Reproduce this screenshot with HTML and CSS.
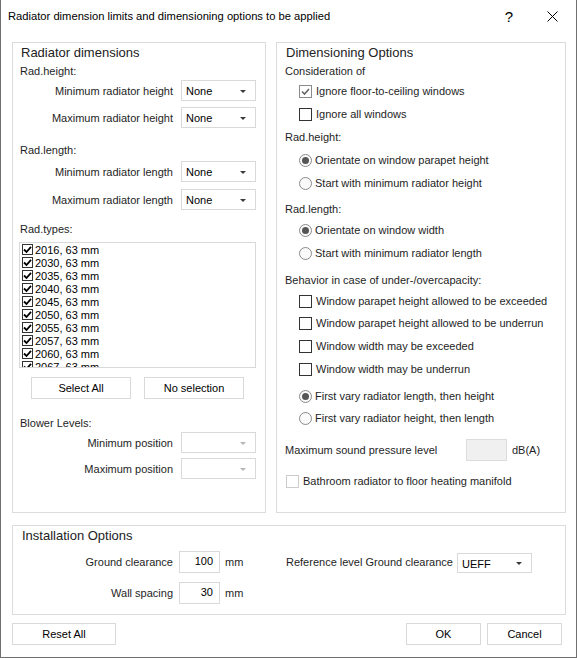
FILE: index.html
```html
<!DOCTYPE html>
<html lang="en">
<head>
<meta charset="utf-8">
<title>Radiator dimension limits</title>
<link rel="stylesheet" href="styles.css">
</head>
<body>
<div class="window">
  <header class="titlebar">
    <span class="title">Radiator dimension limits and dimensioning options to be applied</span>
    <span class="help">?</span>
    <span class="close"><svg width="11" height="11" viewBox="0 0 11 11"><path d="M0.5 0.5L10.5 10.5M10.5 0.5L0.5 10.5" stroke="#000" stroke-width="1" fill="none"/></svg></span>
  </header>

  <main class="content">
    <div class="columns">
      <!-- Left column: radiator dimensions -->
      <section class="group group-left">
        <div class="group-title">Radiator dimensions</div>
        <div class="section-label">Rad.height:</div>
        <div class="field-row">
          <span class="field-label">Minimum radiator height</span>
          <div class="combo"><span>None</span><i class="arrow"></i></div>
        </div>
        <div class="field-row gap-6">
          <span class="field-label">Maximum radiator height</span>
          <div class="combo"><span>None</span><i class="arrow"></i></div>
        </div>
        <div class="section-label gap-13">Rad.length:</div>
        <div class="field-row gap-2">
          <span class="field-label">Minimum radiator length</span>
          <div class="combo"><span>None</span><i class="arrow"></i></div>
        </div>
        <div class="field-row gap-7">
          <span class="field-label">Maximum radiator length</span>
          <div class="combo"><span>None</span><i class="arrow"></i></div>
        </div>
        <div class="section-label gap-10">Rad.types:</div>
        <div class="type-list">
          <div class="type-item"><span class="list-check"><svg viewBox="0 0 9 9"><path d="M1 4.5L3.5 7L8 1.8" /></svg></span>2016, 63 mm</div>
          <div class="type-item"><span class="list-check"><svg viewBox="0 0 9 9"><path d="M1 4.5L3.5 7L8 1.8" /></svg></span>2030, 63 mm</div>
          <div class="type-item"><span class="list-check"><svg viewBox="0 0 9 9"><path d="M1 4.5L3.5 7L8 1.8" /></svg></span>2035, 63 mm</div>
          <div class="type-item"><span class="list-check"><svg viewBox="0 0 9 9"><path d="M1 4.5L3.5 7L8 1.8" /></svg></span>2040, 63 mm</div>
          <div class="type-item"><span class="list-check"><svg viewBox="0 0 9 9"><path d="M1 4.5L3.5 7L8 1.8" /></svg></span>2045, 63 mm</div>
          <div class="type-item"><span class="list-check"><svg viewBox="0 0 9 9"><path d="M1 4.5L3.5 7L8 1.8" /></svg></span>2050, 63 mm</div>
          <div class="type-item"><span class="list-check"><svg viewBox="0 0 9 9"><path d="M1 4.5L3.5 7L8 1.8" /></svg></span>2055, 63 mm</div>
          <div class="type-item"><span class="list-check"><svg viewBox="0 0 9 9"><path d="M1 4.5L3.5 7L8 1.8" /></svg></span>2057, 63 mm</div>
          <div class="type-item"><span class="list-check"><svg viewBox="0 0 9 9"><path d="M1 4.5L3.5 7L8 1.8" /></svg></span>2060, 63 mm</div>
          <div class="type-item"><span class="list-check"><svg viewBox="0 0 9 9"><path d="M1 4.5L3.5 7L8 1.8" /></svg></span>2067, 63 mm</div>
        </div>
        <div class="list-buttons">
          <button class="btn btn-list">Select All</button>
          <button class="btn btn-list">No selection</button>
        </div>
        <div class="section-label gap-15">Blower Levels:</div>
        <div class="field-row">
          <span class="field-label">Minimum position</span>
          <div class="combo disabled"><span></span><i class="arrow"></i></div>
        </div>
        <div class="field-row gap-5">
          <span class="field-label">Maximum position</span>
          <div class="combo disabled"><span></span><i class="arrow"></i></div>
        </div>
      </section>

      <!-- Right column: dimensioning options -->
      <section class="group group-right">
        <div class="group-title">Dimensioning Options</div>
        <div class="section-label">Consideration of</div>
        <div class="option flush"><span class="check checked-dim"><svg viewBox="0 0 11 11"><path d="M2 5.5L4.5 8L9 3" /></svg></span><span>Ignore floor-to-ceiling windows</span></div>
        <div class="option"><span class="check"></span><span>Ignore all windows</span></div>
        <div class="option-head">Rad.height:</div>
        <div class="option"><span class="radio on"></span><span>Orientate on window parapet height</span></div>
        <div class="option"><span class="radio"></span><span>Start with minimum radiator height</span></div>
        <div class="option-head short gap-5">Rad.length:</div>
        <div class="option flush"><span class="radio on"></span><span>Orientate on window width</span></div>
        <div class="option"><span class="radio"></span><span>Start with minimum radiator length</span></div>
        <div class="option-head short gap-6">Behavior in case of under-/overcapacity:</div>
        <div class="option flush"><span class="check"></span><span>Window parapet height allowed to be exceeded</span></div>
        <div class="option flush"><span class="check"></span><span>Window parapet height allowed to be underrun</span></div>
        <div class="option"><span class="check"></span><span>Window width may be exceeded</span></div>
        <div class="option"><span class="check"></span><span>Window width may be underrun</span></div>
        <div class="option gap-5"><span class="radio on"></span><span>First vary radiator length, then height</span></div>
        <div class="option flush"><span class="radio"></span><span>First vary radiator height, then length</span></div>
        <div class="sound-row">
          <span class="sound-label">Maximum sound pressure level</span>
          <span class="input disabled"></span>
          <span class="unit">dB(A)</span>
        </div>
        <div class="option outdent gap-9"><span class="check disabled"></span><span>Bathroom radiator to floor heating manifold</span></div>
      </section>
    </div>

    <!-- Installation options -->
    <section class="group group-install">
      <div class="group-title">Installation Options</div>
      <div class="install-row first">
        <span class="install-label">Ground clearance</span>
        <span class="input">100</span>
        <span class="unit mm">mm</span>
        <span class="ref-label">Reference level Ground clearance</span>
        <div class="combo ref-combo"><span>UEFF</span><i class="arrow"></i></div>
      </div>
      <div class="install-row second">
        <span class="install-label">Wall spacing</span>
        <span class="input">30</span>
        <span class="unit mm">mm</span>
      </div>
    </section>

    <footer class="dialog-buttons">
      <button class="btn btn-reset">Reset All</button>
      <div class="spacer"></div>
      <button class="btn btn-dialog">OK</button>
      <button class="btn btn-dialog">Cancel</button>
    </footer>
  </main>
</div>
</body>
</html>
```
FILE: styles.css
```css
* { box-sizing: border-box; }

html, body {
  margin: 0;
  padding: 0;
  background: #ffffff;
}

body {
  font-family: "Liberation Sans", Arial, sans-serif;
  font-size: 11px;
  color: #1e1e1e;
}

.window {
  width: 577px;
  height: 658px;
  background: #ffffff;
  border: 1px solid #707070;
  border-top: none;
}

/* ---------- title bar ---------- */
.titlebar {
  height: 32px;
  display: flex;
  align-items: center;
  padding: 0 18px 0 7px;
}

.title {
  flex: 1;
  font-size: 11.2px;
  color: #000;
}

.help {
  width: 16px;
  text-align: center;
  font-size: 15px;
  color: #000;
  margin-right: 30px;
}

.close {
  width: 11px;
  height: 11px;
  display: flex;
}

/* ---------- content ---------- */
.content {
  padding: 10px 10px 0 11px;
}

.columns {
  display: flex;
  gap: 10px;
  height: 471px;
}

.group {
  border: 1px solid #dcdcdc;
}

.group-left {
  width: 254px;
  padding: 0 9px 0 7px;
}

.group-right {
  width: 290px;
  padding: 0 8px;
}

.group-title {
  height: 19px;
  line-height: 19px;
  font-size: 13px;
  color: #222;
  padding-left: 1px;
}

.section-label {
  height: 18px;
  display: flex;
  align-items: center;
}

.gap-2 { margin-top: 2px; }
.gap-5 { margin-top: 5px; }
.gap-6 { margin-top: 6px; }
.gap-7 { margin-top: 7px; }
.gap-9 { margin-top: 9px; }
.gap-10 { margin-top: 10px; }
.gap-13 { margin-top: 13px; }
.gap-15 { margin-top: 15px; }

/* label + combo rows */
.field-row {
  height: 21px;
  display: flex;
  align-items: center;
  justify-content: flex-end;
  gap: 8px;
}

.field-label {
  white-space: nowrap;
}

.combo {
  width: 75px;
  height: 21px;
  border: 1px solid #d9d9d9;
  background: #fff;
  display: flex;
  align-items: center;
  justify-content: space-between;
  padding: 1px 9px 0 4px;
  color: #000;
}

.arrow {
  width: 0;
  height: 0;
  border-left: 3px solid transparent;
  border-right: 3px solid transparent;
  border-top: 3px solid #3a3a3a;
}

.combo.disabled .arrow {
  border-top-color: #b5b5b5;
}

/* radiator type list */
.type-list {
  margin: 4px 0 0 -1px;
  width: 237px;
  height: 126px;
  border: 1px solid #d9d9d9;
  padding: 0 1px;
  overflow: hidden;
}

.type-item {
  height: 13px;
  display: flex;
  align-items: center;
  color: #000;
  font-size: 11px;
  white-space: nowrap;
}

.list-check {
  width: 11px;
  height: 11px;
  border: 1px solid #333;
  margin: 0 2px 0 1px;
  display: flex;
  align-items: center;
  justify-content: center;
}

.list-check svg {
  width: 9px;
  height: 9px;
  fill: none;
  stroke: #000;
  stroke-width: 1.8;
}

.list-buttons {
  display: flex;
  gap: 13px;
  margin: 9px 0 0 11px;
}

.btn {
  font-family: inherit;
  font-size: 11px;
  color: #000;
  background: #fff;
  border: 1px solid #d9d9d9;
  height: 22px;
  padding: 0;
}

.btn-list {
  width: 100px;
}

/* option rows (checkboxes / radios) */
.option {
  height: 22px;
  display: flex;
  align-items: center;
  gap: 3px;
  margin-top: 1px;
  padding-left: 14px;
  white-space: nowrap;
}

.option.flush { margin-top: 0; }
.option.gap-5 { margin-top: 5px; }
.option.gap-9 { margin-top: 9px; }

.option.outdent {
  padding-left: 1px;
}

.option-head {
  height: 22px;
  margin-top: 1px;
  display: flex;
  align-items: center;
}

.option-head.short { height: 20px; }
.option-head.gap-5 { margin-top: 5px; }
.option-head.gap-6 { margin-top: 6px; }

.check {
  width: 13px;
  height: 13px;
  border: 1px solid #333;
  background: #fff;
  display: flex;
  align-items: center;
  justify-content: center;
  flex: none;
  margin-right: 1px;
}

.check svg {
  width: 11px;
  height: 11px;
  fill: none;
  stroke: #666;
  stroke-width: 1.6;
}

.check.checked-dim {
  border-color: #8a8a8a;
}

.check.disabled {
  border-color: #cccccc;
}

.radio {
  width: 13px;
  height: 13px;
  border: 1px solid #8a8a8a;
  border-radius: 50%;
  background: #fafafa;
  display: flex;
  align-items: center;
  justify-content: center;
  flex: none;
}

.radio.on::after {
  content: "";
  width: 7px;
  height: 7px;
  border-radius: 50%;
  background: #555;
}

/* sound pressure row */
.sound-row {
  height: 22px;
  margin-top: 10px;
  display: flex;
  align-items: center;
}

.sound-label {
  width: 181px;
}

.input {
  width: 41px;
  height: 22px;
  border: 1px solid #d9d9d9;
  background: #fff;
  display: flex;
  align-items: center;
  justify-content: flex-end;
  padding: 0 6px 2px 0;
  color: #000;
}

.input.disabled {
  background: #f0f0f0;
  border-color: #dcdcdc;
}

.unit {
  margin-left: 5px;
}

/* installation options */
.group-install {
  margin-top: 12px;
  height: 90px;
  padding: 0 8px;
}

.install-row {
  display: flex;
  align-items: center;
  height: 22px;
}

.install-row.first { margin-top: 6px; }
.install-row.second { margin-top: 9px; }

.install-label {
  width: 159px;
  text-align: right;
  padding-right: 6px;
  margin-left: -1px;
}

.unit.mm {
  width: 61px;
}

.ref-label {
  width: 171px;
  white-space: nowrap;
}

.ref-combo {
  height: 20px;
  margin-top: 2px;
}

/* dialog buttons */
.dialog-buttons {
  display: flex;
  gap: 6px;
  margin-top: 8px;
  padding-right: 4px;
}

.btn-reset {
  width: 104px;
}

.spacer {
  flex: 1;
}

.btn-dialog {
  width: 75px;
}
```
